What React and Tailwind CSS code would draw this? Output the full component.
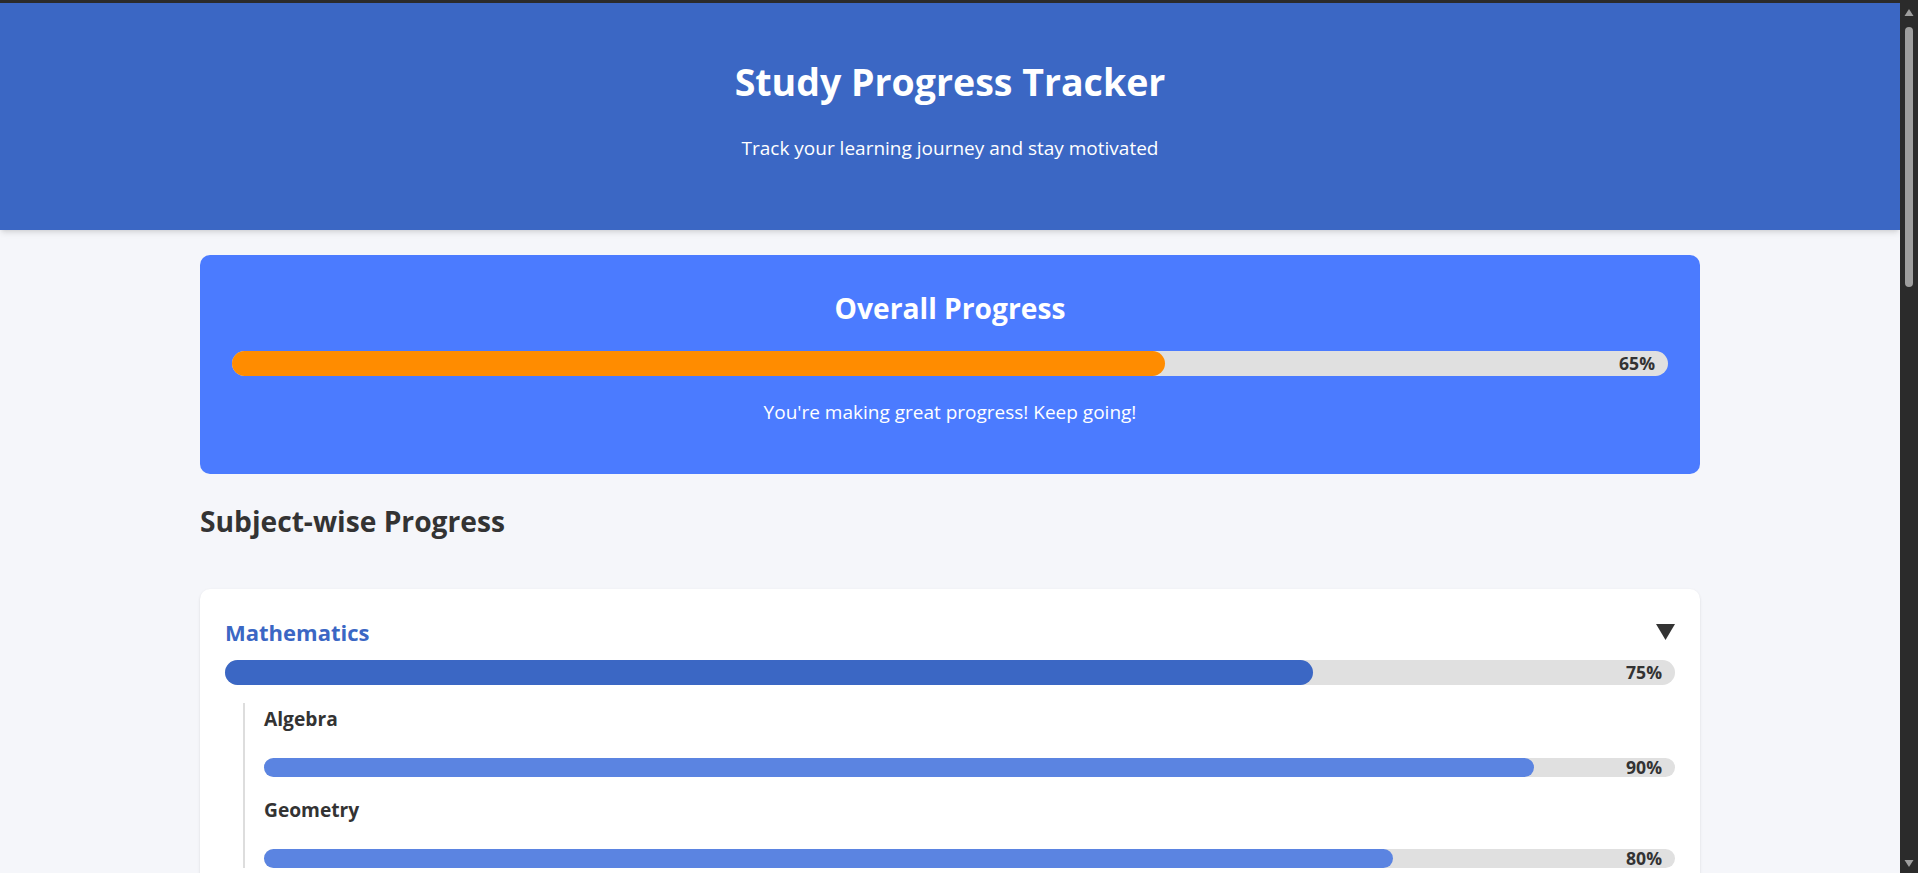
import React from "react";

const subjects = [
  {
    name: "Mathematics",
    progress: 75,
    topics: [
      { name: "Algebra", progress: 90 },
      { name: "Geometry", progress: 80 },
    ],
  },
];

const Bar = ({ value, fill, height }) => (
  <div className={`relative w-full rounded-full bg-[#e0e0e0] ${height}`}>
    <div className={`h-full rounded-full ${fill}`} style={{ width: `${value}%` }} />
    <span className="absolute inset-y-0 right-[13px] flex items-center text-[17.6px] font-bold text-[#333]">
      {value}%
    </span>
  </div>
);

// window scrollbar, as it shows in the screenshot
const Scrollbar = () => (
  <div className="flex w-[18px] shrink-0 flex-col items-center bg-[#2b2b2b]">
    <svg width="10" height="17" viewBox="0 0 10 17" className="fill-[#9e9e9e]">
      <polygon points="5,6 9.5,13 0.5,13" />
    </svg>
    <div className="flex-1 pt-[7px]">
      <div className="h-[260px] w-[8px] rounded-full bg-[#9e9e9e]" />
    </div>
    <svg width="10" height="17" viewBox="0 0 10 17" className="fill-[#9e9e9e]">
      <polygon points="0.5,4 9.5,4 5,11" />
    </svg>
  </div>
);

const App = () => {
  return (
    <div className="flex h-screen flex-col bg-[#f5f6fa] font-['Open_Sans','Segoe_UI',sans-serif] text-[#333]">
      <div className="h-[3px] shrink-0 bg-[#2b2b2b]" />
      <div className="flex min-h-0 flex-1">
        <div className="min-w-0 flex-1 overflow-hidden">
          {/* Header */}
          <header className="bg-[#3b67c4] pt-[55px] pb-[67px] text-center text-white shadow-md">
            <h1 className="text-[37.5px] font-bold leading-[48px]">Study Progress Tracker</h1>
            <p className="mt-[28px] text-[19px] leading-[28.8px]">Track your learning journey and stay motivated</p>
          </header>

          <main className="mx-auto max-w-[1500px]">
            {/* Overall */}
            <section className="mt-[25px] rounded-[10px] bg-[#4b7bff] px-8 pt-[33px] pb-[47px] text-center text-white">
              <h2 className="text-[28.2px] font-bold leading-[40px]">Overall Progress</h2>
              <div className="mt-[23px]">
                <Bar value={65} fill="bg-[#ff8c00]" height="h-[25px]" />
              </div>
              <p className="mt-[22px] text-[19px] leading-[28.8px]">You're making great progress! Keep going!</p>
            </section>

            <h2 className="mt-[27px] text-[28.2px] font-bold leading-[40px]">Subject-wise Progress</h2>

            {/* Subjects */}
            <div className="mt-[48px] space-y-6">
              {subjects.map((s) => (
                <div key={s.name} className="rounded-[10px] bg-white px-[25px] pt-[26px] pb-[25px] shadow-sm">
                  <div className="flex items-center justify-between">
                    <h3 className="text-[22px] font-bold leading-[34px] text-[#3b67c4]">{s.name}</h3>
                    <svg width="19" height="16" viewBox="0 0 19 16" className="fill-[#333]">
                      <polygon points="0,0 19,0 9.5,16" />
                    </svg>
                  </div>
                  <div className="mt-[11px]">
                    <Bar value={s.progress} fill="bg-[#3b67c4]" height="h-[25px]" />
                  </div>
                  <div className="mt-[18px] ml-[18px] border-l-2 border-[#ddd] pt-[2px] pl-[19px]">
                    {s.topics.map((t) => (
                      <div key={t.name} className="mb-[19px]">
                        <h4 className="text-[19.2px] font-bold leading-[28px]">{t.name}</h4>
                        <div className="mt-[25px]">
                          <Bar value={t.progress} fill="bg-[#5b84e1]" height="h-[19px]" />
                        </div>
                      </div>
                    ))}
                  </div>
                </div>
              ))}
            </div>
          </main>
        </div>
        <Scrollbar />
      </div>
    </div>
  );
};

export default App;
